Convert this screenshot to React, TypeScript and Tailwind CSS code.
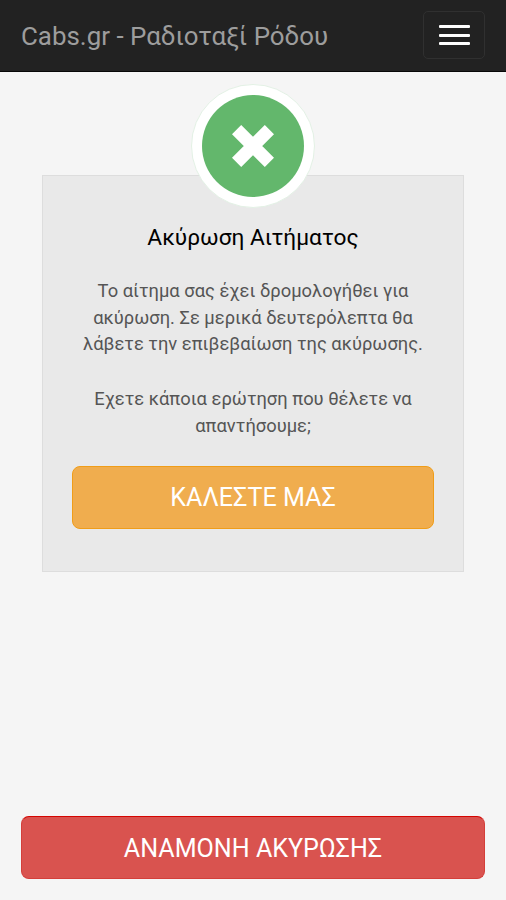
import { useState } from "react";

const TITLE = "Cabs.gr - Ραδιοταξί Ρόδου";

function Navbar() {
    const [open, setOpen] = useState(false);

    return (
        <nav className="flex h-[72px] shrink-0 items-start justify-between border-b border-[#080808] bg-[#222222] px-[21px] pt-[11px]">
            <span className="pt-[7px] text-[25.9px] leading-[36px] whitespace-nowrap text-[#9d9d9d]">{TITLE}</span>
            <button
                type="button"
                aria-expanded={open}
                onClick={() => setOpen(!open)}
                className="flex h-[48px] w-[62px] flex-col items-center justify-center gap-[5.5px] rounded-[5px] border border-[#303030]"
            >
                <span className="h-[3px] w-[31px] rounded-[1px] bg-white" />
                <span className="h-[3px] w-[31px] rounded-[1px] bg-white" />
                <span className="h-[3px] w-[31px] rounded-[1px] bg-white" />
            </button>
        </nav>
    );
}

function CancelBadge() {
    return (
        <div className="absolute -top-[92px] left-1/2 flex size-[124px] -translate-x-1/2 items-center justify-center rounded-full border border-[#e3f1e5] bg-white">
            <div className="flex size-[102px] items-center justify-center rounded-full bg-[#63b76c]">
                <svg viewBox="0 0 42 42" className="size-[42px]" fill="none" stroke="white" strokeWidth="13">
                    <path d="M4.6 4.6 37.4 37.4M37.4 4.6 4.6 37.4" />
                </svg>
            </div>
        </div>
    );
}

export default function App() {
    return (
        <div className="flex h-[900px] w-[506px] flex-col bg-[#f5f5f5] font-[Roboto,sans-serif]">
            <Navbar />
            <main className="relative mx-[42px] mt-[103px] h-[397px] border border-[#dddddd] bg-[#e9e9e9] px-[29px] pt-[45px] text-center">
                <CancelBadge />
                <h1 className="text-[22.7px] leading-[34px] text-black">Ακύρωση Αιτήματος</h1>
                <p className="mt-[23px] text-[18.35px] leading-[26.7px] whitespace-nowrap text-[#555555]">
                    Το αίτημα σας έχει δρομολογήθει για
                    <br />
                    ακύρωση. Σε μερικά δευτερόλεπτα θα
                    <br />
                    λάβετε την επιβεβαίωση της ακύρωσης.
                </p>
                <p className="mt-[28px] text-[18.35px] leading-[26.7px] whitespace-nowrap text-[#555555]">
                    Εχετε κάποια ερώτηση που θέλετε να
                    <br />
                    απαντήσουμε;
                </p>
                <button type="button" className="mt-[26px] h-[63px] w-full rounded-[8px] border border-[#f09d18] bg-[#f0ad4e] pt-[1px] text-[25.1px] text-white">
                    ΚΑΛΕΣΤΕ ΜΑΣ
                </button>
            </main>
            <button type="button" className="mx-[21px] mt-auto mb-[21px] h-[63px] shrink-0 rounded-[8px] border border-[#d43f3a] border-t-[#d40500] bg-[#d9534f] pt-[2px] text-[25.1px] text-white">
                ΑΝΑΜΟΝΗ ΑΚΥΡΩΣΗΣ
            </button>
        </div>
    );
}
